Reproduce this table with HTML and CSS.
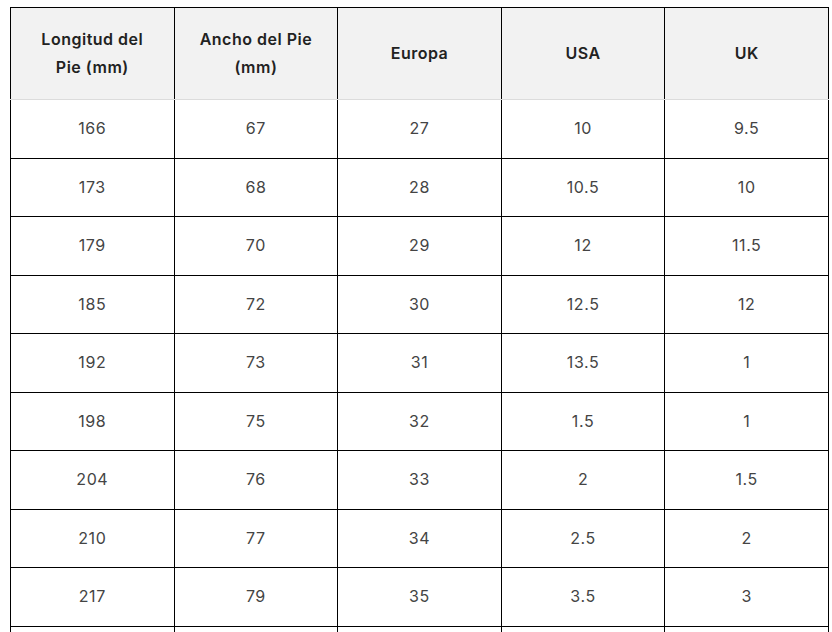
FILE: index.html
```html
<!DOCTYPE html>
<html lang="es">
<head>
<meta charset="utf-8">
<title>Tabla de tallas</title>
<link rel="stylesheet" href="styles.css">
</head>
<body>
<table class="size-table">
  <thead>
    <tr>
      <th>Longitud del Pie (mm)</th>
      <th>Ancho del Pie (mm)</th>
      <th>Europa</th>
      <th>USA</th>
      <th>UK</th>
    </tr>
  </thead>
  <tbody>
    <tr><td>166</td><td>67</td><td>27</td><td>10</td><td>9.5</td></tr>
    <tr><td>173</td><td>68</td><td>28</td><td>10.5</td><td>10</td></tr>
    <tr><td>179</td><td>70</td><td>29</td><td>12</td><td>11.5</td></tr>
    <tr><td>185</td><td>72</td><td>30</td><td>12.5</td><td>12</td></tr>
    <tr><td>192</td><td>73</td><td>31</td><td>13.5</td><td>1</td></tr>
    <tr><td>198</td><td>75</td><td>32</td><td>1.5</td><td>1</td></tr>
    <tr><td>204</td><td>76</td><td>33</td><td>2</td><td>1.5</td></tr>
    <tr><td>210</td><td>77</td><td>34</td><td>2.5</td><td>2</td></tr>
    <tr><td>217</td><td>79</td><td>35</td><td>3.5</td><td>3</td></tr>
    <tr><td>223</td><td>80</td><td>36</td><td>4.5</td><td>3.5</td></tr>
  </tbody>
</table>
</body>
</html>
```
FILE: styles.css
```css
html, body {
  margin: 0;
  padding: 0;
  background: #fff;
}
body {
  padding: 7px 0 0 10px;
  font-family: "Inter", "Noto Sans", sans-serif;
}
.size-table {
  width: 819px;
  border-collapse: collapse;
  table-layout: fixed;
  border: 1px solid #000;
}
.size-table th,
.size-table td {
  border-left: 1px solid #000;
  border-right: 1px solid #000;
  text-align: center;
  vertical-align: middle;
}
.size-table th {
  background: #f2f2f2;
  color: #222;
  font-weight: 600;
  font-size: 16px;
  letter-spacing: 0.5px;
  line-height: 28px;
  padding: 17px 18px 18px;
  border-bottom: 1px solid #dcdcdc;
}
.size-table td {
  color: #444;
  font-weight: 400;
  font-size: 16px;
  letter-spacing: 0.6px;
  line-height: 27.5px;
  padding: 15px 10px;
  border-top: 1px solid #000;
}
.size-table tbody tr:first-child td {
  border-top: 1px solid #dcdcdc;
}
```
